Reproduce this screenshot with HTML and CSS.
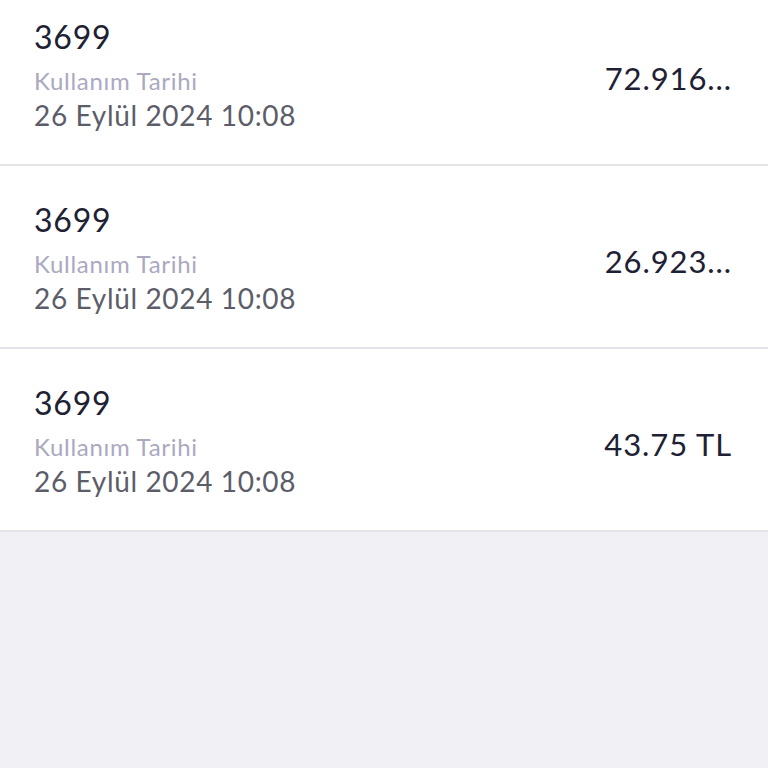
FILE: index.html
```html
<!DOCTYPE html>
<html lang="tr">
<head>
    <meta charset="UTF-8">
    <meta name="viewport" content="width=device-width, initial-scale=1.0">
    <title>Kullanımlar</title>
    <link rel="stylesheet" href="styles.css">
</head>
<body>

    <div class="usage-list">
        <div class="usage-row">
            <div class="usage-info">
                <div class="usage-code">3699</div>
                <div class="usage-label">Kullanım Tarihi</div>
                <div class="usage-date">26 Eylül 2024 10:08</div>
            </div>
            <div class="usage-amount">72.916...</div>
        </div>

        <div class="usage-row">
            <div class="usage-info">
                <div class="usage-code">3699</div>
                <div class="usage-label">Kullanım Tarihi</div>
                <div class="usage-date">26 Eylül 2024 10:08</div>
            </div>
            <div class="usage-amount">26.923...</div>
        </div>

        <div class="usage-row">
            <div class="usage-info">
                <div class="usage-code">3699</div>
                <div class="usage-label">Kullanım Tarihi</div>
                <div class="usage-date">26 Eylül 2024 10:08</div>
            </div>
            <div class="usage-amount">43.75 TL</div>
        </div>
    </div>

</body>
</html>
```

FILE: styles.css
```css
body {
    font-family: Lato, "Open Sans", sans-serif;
    background-color: #f1f1f5;
    margin: 0;
    padding: 0;
}

/* list is scrolled a little, first row is cut at the top */
.usage-list {
    margin-top: -17px;
}

.usage-row {
    display: flex;
    justify-content: space-between;
    align-items: center;
    background: white;
    height: 183px;
    box-sizing: border-box;
    padding: 0 36px 5px 34px;
    border-bottom: 2px solid #e3e3e9;
}

.usage-code {
    font-size: 32px;
    line-height: 48px;
    letter-spacing: 0.8px;
    color: #1e2133;
}

.usage-label {
    font-size: 24px;
    line-height: 40px;
    letter-spacing: 0.7px;
    color: #aba9bf;
}

.usage-date {
    font-size: 28px;
    line-height: 28px;
    letter-spacing: 0.65px;
    color: #5b5d68;
}

.usage-amount {
    font-size: 31px;
    letter-spacing: 0.9px;
    color: #1e2133;
    margin-top: 14px;
}
```
